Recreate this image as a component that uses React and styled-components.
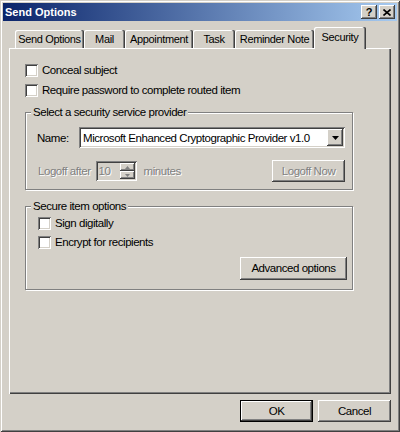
import React from "react";
import styled, { createGlobalStyle, css } from "styled-components";

const GlobalStyle = createGlobalStyle`
  html, body { margin: 0; padding: 0; background: #d4d0c8; }
  body { font-family: "Liberation Sans", Arial, sans-serif; font-size: 11.5px; letter-spacing: -0.45px; color: #000; }
  * { box-sizing: border-box; }
`;

const raised = css`
  box-shadow: inset -1px -1px 0 #404040, inset 1px 1px 0 #fff, inset -2px -2px 0 #808080, inset 2px 2px 0 #d4d0c8;
`;
const sunken = css`
  box-shadow: inset 1px 1px 0 #808080, inset -1px -1px 0 #fff, inset 2px 2px 0 #404040, inset -2px -2px 0 #d4d0c8;
`;

const Window = styled.div`
  width: 400px;
  height: 432px;
  padding: 3px;
  display: flex;
  flex-direction: column;
  background: #d4d0c8;
  box-shadow: inset 1px 1px 0 #d4d0c8, inset -1px -1px 0 #404040, inset 2px 2px 0 #fff, inset -2px -2px 0 #808080;
`;

const TitleBar = styled.div`
  height: 18px;
  display: flex;
  align-items: center;
  padding: 0 2px;
  background: linear-gradient(to right, #0a246a, #a6caf0);
`;

const Title = styled.div`
  flex: 1;
  color: #fff;
  font-weight: bold;
  font-size: 11px;
  letter-spacing: 0;
`;

const CaptionButtons = styled.div`
  display: flex;
  gap: 2px;
`;

const CaptionButton = styled.div`
  width: 16px;
  height: 14px;
  ${raised}
  background: #d4d0c8;
  display: flex;
  align-items: center;
  justify-content: center;
  font-weight: bold;
  font-size: 11px;
  line-height: 14px;
  letter-spacing: 0;
`;

const Body = styled.div`
  flex: 1;
  display: flex;
  flex-direction: column;
  padding: 6px 6px 7px;
`;

const TabStrip = styled.div`
  height: 21px;
  display: flex;
  align-items: flex-end;
  padding-left: 6px;
`;

const Tab = styled.div`
  width: ${(p) => p.$width}px;
  height: ${(p) => (p.$active ? 22 : 18)}px;
  margin-bottom: ${(p) => (p.$active ? -1 : 0)}px;
  position: relative;
  z-index: ${(p) => (p.$active ? 1 : 0)};
  background: #d4d0c8;
  border-radius: 2px 2px 0 0;
  box-shadow: inset -1px 0 0 #404040, inset -2px 0 0 #808080, inset 1px 1px 0 #fff;
  display: flex;
  align-items: flex-start;
  justify-content: center;
  padding-top: ${(p) => (p.$active ? 4 : 3)}px;
  font-size: 11px;
  letter-spacing: -0.35px;
  line-height: 13px;
  white-space: nowrap;
`;

const Panel = styled.div`
  flex: 1;
  padding: 12px 38px 0 16px;
  box-shadow: inset 1px 1px 0 #fff, inset -1px -1px 0 #404040, inset -2px -2px 0 #808080;
  display: flex;
  flex-direction: column;
`;

const CheckRow = styled.label`
  height: ${(p) => p.$h || 20}px;
  display: flex;
  align-items: center;
  line-height: 13px;
  white-space: nowrap;
`;

const CheckBox = styled.span`
  width: 13px;
  height: 13px;
  margin-right: 4px;
  flex: none;
  background: #fff;
  ${sunken}
`;

const Group = styled.div`
  position: relative;
  margin-top: ${(p) => p.$mt}px;
  border: 1px solid #808080;
  box-shadow: inset 1px 1px 0 #fff, 1px 1px 0 #fff;
  padding: ${(p) => p.$pad};
  display: flex;
  flex-direction: column;
`;

const GroupLabel = styled.span`
  position: absolute;
  top: -7px;
  left: 5px;
  padding: 0 2px;
  background: #d4d0c8;
  line-height: 13px;
  white-space: nowrap;
`;

const FieldRow = styled.div`
  height: ${(p) => p.$h}px;
  margin-top: ${(p) => p.$mt || 0}px;
  display: flex;
  align-items: center;
  white-space: nowrap;
`;

const FieldLabel = styled.span`
  width: ${(p) => (p.$w ? `${p.$w}px` : "auto")};
  margin-left: ${(p) => p.$ml || 0}px;
  margin-right: ${(p) => p.$mr || 0}px;
  ${(p) =>
    p.$disabled &&
    css`
      color: #808080;
      text-shadow: 1px 1px 0 #fff;
    `}
`;

const Select = styled.div`
  flex: 1;
  height: 21px;
  background: #fff;
  ${sunken}
  display: flex;
  align-items: center;
  padding: 2px;
`;

const SelectText = styled.span`
  flex: 1;
  padding-left: 2px;
  overflow: hidden;
`;

const DropButton = styled.div`
  width: 16px;
  height: 17px;
  background: #d4d0c8;
  ${raised}
  display: flex;
  align-items: center;
  justify-content: center;
`;

const SpinField = styled.div`
  width: 41px;
  height: 20px;
  ${sunken}
  background: #d4d0c8;
  display: flex;
  padding: 2px;
`;

const SpinText = styled.span`
  flex: 1;
  padding-left: 1px;
  line-height: 16px;
  color: #808080;
  text-shadow: 1px 1px 0 #fff;
`;

const SpinButtons = styled.div`
  width: 15px;
  display: flex;
  flex-direction: column;
`;

const SpinHalf = styled.div`
  flex: 1;
  background: #d4d0c8;
  ${raised}
  display: flex;
  align-items: center;
  justify-content: center;
`;

const Button = styled.div`
  width: ${(p) => p.$width}px;
  height: ${(p) => p.$height || 22}px;
  margin-left: ${(p) => (p.$auto ? "auto" : "0")};
  margin-top: ${(p) => p.$mt || 0}px;
  align-self: ${(p) => (p.$end ? "flex-end" : "auto")};
  background: #d4d0c8;
  ${raised}
  ${(p) =>
    p.$default &&
    css`
      border: 1px solid #000;
    `}
  display: flex;
  align-items: center;
  justify-content: center;
  line-height: 13px;
  white-space: nowrap;
  ${(p) =>
    p.$disabled &&
    css`
      color: #808080;
      text-shadow: 1px 1px 0 #fff;
    `}
`;

const ButtonRow = styled.div`
  margin-top: 6px;
  display: flex;
  justify-content: flex-end;
  gap: 5px;
`;

const tabs = [
  { label: "Send Options", width: 69 },
  { label: "Mail", width: 41 },
  { label: "Appointment", width: 68 },
  { label: "Task", width: 42 },
  { label: "Reminder Note", width: 79 },
  { label: "Security", width: 52, active: true },
];

const Down = ({ color = "#000" }) => (
  <svg width="7" height="4" viewBox="0 0 7 4">
    <path d="M0 0h7L3.5 4z" fill={color} />
  </svg>
);

const SmallTri = ({ up }) => (
  <svg width="5" height="3" viewBox="0 0 5 3">
    <path d={up ? "M0 3h5L2.5 0z" : "M0 0h5L2.5 3z"} fill="#808080" />
  </svg>
);

export default function App() {
  return (
    <>
      <GlobalStyle />
      <Window>
        <TitleBar>
          <Title>Send Options</Title>
          <CaptionButtons>
            <CaptionButton>?</CaptionButton>
            <CaptionButton>
              <svg width="8" height="7" viewBox="0 0 8 7">
                <path d="M0.5 0.5l7 6M7.5 0.5l-7 6" stroke="#000" strokeWidth="1.6" />
              </svg>
            </CaptionButton>
          </CaptionButtons>
        </TitleBar>
        <Body>
          <TabStrip>
            {tabs.map((t) => (
              <Tab key={t.label} $width={t.width} $active={t.active}>
                {t.label}
              </Tab>
            ))}
          </TabStrip>
          <Panel>
            <CheckRow>
              <CheckBox />
              Conceal subject
            </CheckRow>
            <CheckRow>
              <CheckBox />
              Require password to complete routed item
            </CheckRow>
            <Group $mt={12} $pad="14px 7px 7px 11px">
              <GroupLabel>Select a security service provider</GroupLabel>
              <FieldRow $h={21}>
                <FieldLabel $w={42}>Name:</FieldLabel>
                <Select>
                  <SelectText>Microsoft Enhanced Cryptographic Provider v1.0</SelectText>
                  <DropButton>
                    <Down />
                  </DropButton>
                </Select>
              </FieldRow>
              <FieldRow $h={22} $mt={12}>
                <FieldLabel $disabled $ml={1} $mr={5}>
                  Logoff after
                </FieldLabel>
                <SpinField>
                  <SpinText>10</SpinText>
                  <SpinButtons>
                    <SpinHalf>
                      <SmallTri up />
                    </SpinHalf>
                    <SpinHalf>
                      <SmallTri />
                    </SpinHalf>
                  </SpinButtons>
                </SpinField>
                <FieldLabel $disabled $ml={7}>
                  minutes
                </FieldLabel>
                <Button $width={73} $auto $disabled>
                  Logoff Now
                </Button>
              </FieldRow>
            </Group>
            <Group $mt={16} $pad="7px 5px 9px 12px">
              <GroupLabel>Secure item options</GroupLabel>
              <CheckRow $h={19}>
                <CheckBox />
                Sign digitally
              </CheckRow>
              <CheckRow $h={19}>
                <CheckBox />
                Encrypt for recipients
              </CheckRow>
              <Button $width={107} $height={23} $mt={5} $end>
                Advanced options
              </Button>
            </Group>
          </Panel>
          <ButtonRow>
            <Button $width={73} $default>
              OK
            </Button>
            <Button $width={73}>Cancel</Button>
          </ButtonRow>
        </Body>
      </Window>
    </>
  );
}
